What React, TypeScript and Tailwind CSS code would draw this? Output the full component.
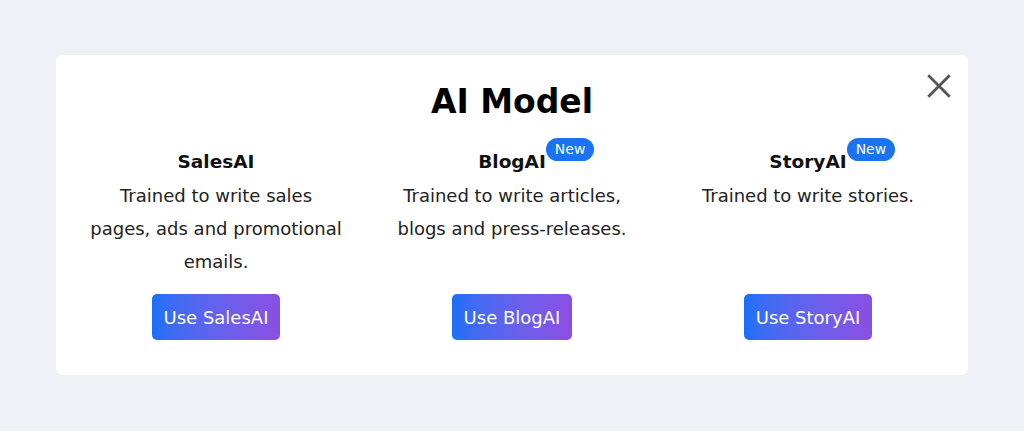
import React from "react";

type Model = { name: string; desc: string; isNew?: boolean };

const models: Model[] = [
  { name: "SalesAI", desc: "Trained to write sales pages, ads and promotional emails." },
  { name: "BlogAI", desc: "Trained to write articles, blogs and press-releases.", isNew: true },
  { name: "StoryAI", desc: "Trained to write stories.", isNew: true },
];

export default function App() {
  return (
    <div
      className="w-[1024px] h-[431px] bg-[#edf1f5] pt-[55px] px-[56px]"
      style={{ fontFamily: '"DejaVu Sans", Verdana, sans-serif' }}
    >
      <div className="relative bg-white rounded-[6px] h-[320px] px-[12px] pt-[26px]">
        <button className="absolute right-[16px] top-[18px] w-[26px] h-[26px] text-[#555]">
          <svg viewBox="0 0 24 24" width="26" height="26" fill="none" stroke="currentColor" strokeWidth="2.6" strokeLinecap="square">
            <path d="M3 3 L21 21 M21 3 L3 21" />
          </svg>
        </button>
        <h1 className="text-center text-[33px] font-bold text-black leading-[42px]">AI Model</h1>
        <div className="grid grid-cols-3 mt-[26px]">
          {models.map((m) => (
            <div key={m.name} className="flex flex-col items-center">
              <div className="relative">
                <span className="text-[18.5px] font-bold text-[#111] leading-[26px]">{m.name}</span>
                {m.isNew && (
                  <span className="absolute left-full bottom-[14px] bg-[#1a73f0] text-white text-[14px] leading-[23px] px-[9px] rounded-full">
                    New
                  </span>
                )}
              </div>
              <p className="text-center text-[18px] leading-[33px] text-[#222] w-[256px] h-[100px] mt-[4px]">
                {m.desc}
              </p>
              <button className="mt-[15px] h-[46px] px-[12px] rounded-[5px] text-white text-[18px] bg-gradient-to-r from-[#1570f7] to-[#8a4ee2]">
                Use {m.name}
              </button>
            </div>
          ))}
        </div>
      </div>
    </div>
  );
}
